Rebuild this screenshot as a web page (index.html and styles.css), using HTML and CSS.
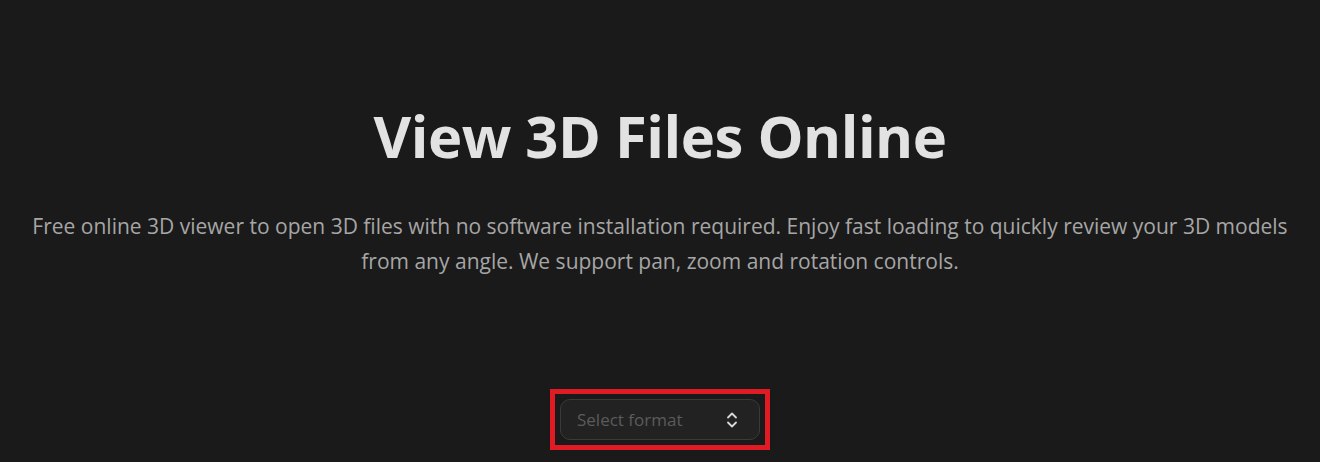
FILE: index.html
```html
<!DOCTYPE html>
<html lang="en">
<head>
<meta charset="utf-8">
<title>View 3D Files Online</title>
<link rel="stylesheet" href="styles.css">
</head>
<body>
<main class="hero">
  <h1 class="hero-title">View 3D Files Online</h1>
  <p class="hero-text">Free online 3D viewer to open 3D files with no software installation required. Enjoy fast loading to quickly review your 3D models from any angle. We support pan, zoom and rotation controls.</p>
  <div class="picker">
    <button class="select" type="button">
      <span class="select-placeholder">Select format</span>
      <svg class="select-icon" width="12" height="18" viewBox="0 0 12 18" fill="none" stroke="currentColor" stroke-width="1.8" stroke-linecap="round" stroke-linejoin="round"><path d="M2 6.5 6 2.5 10 6.5"/><path d="M2 11.5 6 15.5 10 11.5"/></svg>
    </button>
  </div>
  <p class="hint">Choose the file format to get started</p>
</main>
</body>
</html>
```

FILE: styles.css
```css
html, body {
  margin: 0;
  padding: 0;
  background: #1a1a1a;
  height: 100%;
  overflow: hidden;
}
body {
  font-family: "Open Sans", "Noto Sans", sans-serif;
  color: #e0e0e0;
}
.hero {
  display: flex;
  flex-direction: column;
  align-items: center;
  padding: 96px 20px 0;
  text-align: center;
}
.hero-title {
  margin: 0;
  font-size: 58px;
  font-weight: 700;
  line-height: 80px;
  color: #e2e2e2;
  letter-spacing: -0.5px;
}
.hero-text {
  margin: 33px 0 0;
  max-width: 1280px;
  font-size: 21px;
  line-height: 35px;
  color: #a6a6a6;
}
.picker {
  margin-top: 110px;
  padding: 5px;
  border: 5px solid #e01b24;
}
.select {
  display: flex;
  align-items: center;
  justify-content: space-between;
  width: 200px;
  height: 41px;
  box-sizing: border-box;
  padding: 0 21px 0 16px;
  background: #222222;
  border: 1px solid #3a3a3a;
  border-radius: 10px;
  font-family: inherit;
  cursor: pointer;
}
.select-placeholder {
  font-size: 17px;
  color: #5b5b5b;
}
.select-icon {
  color: #d8d8d8;
}
.hint {
  margin: 6px 0 0;
  font-size: 16px;
  line-height: 24px;
  color: #8a8a8a;
}
```
